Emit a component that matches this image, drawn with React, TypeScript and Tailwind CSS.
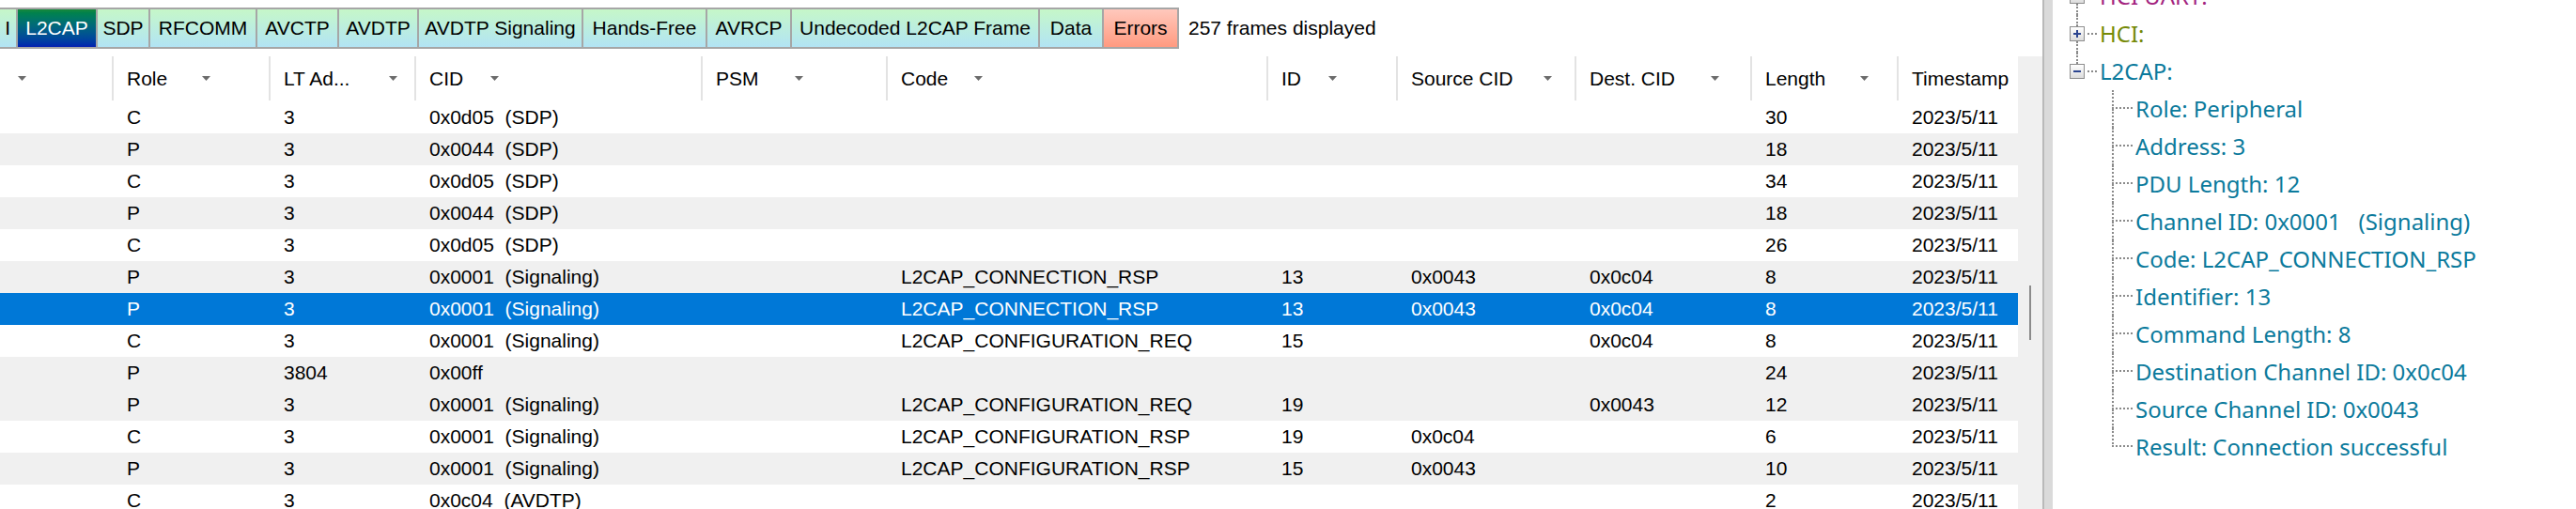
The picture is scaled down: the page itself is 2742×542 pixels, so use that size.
import React from 'react';

// column widths of the frame list, left to right
const cols = [
  { w: 'w-[121px]', label: '', span: 'w-[5px]' },
  { w: 'w-[167px]', label: 'Role', span: 'w-[80px]' },
  { w: 'w-[155px]', label: 'LT Ad...', span: 'w-[112px]' },
  { w: 'w-[305px]', label: 'CID', span: 'w-[65px]' },
  { w: 'w-[197px]', label: 'PSM', span: 'w-[84px]' },
  { w: 'w-[405px]', label: 'Code', span: 'w-[78px]' },
  { w: 'w-[138px]', label: 'ID', span: 'w-[50px]' },
  { w: 'w-[190px]', label: 'Source CID', span: 'w-[141px]' },
  { w: 'w-[187px]', label: 'Dest. CID', span: 'w-[129px]' },
  { w: 'w-[156px]', label: 'Length', span: 'w-[101px]' },
  { w: 'w-[127px]', label: 'Timestamp', span: '' },
];

const tabs = [
  { label: 'I', w: 'w-[19px]', kind: 'part' },
  { label: 'L2CAP', w: 'w-[85px]', kind: 'active' },
  { label: 'SDP', w: 'w-[56px]', kind: 'normal' },
  { label: 'RFCOMM', w: 'w-[114px]', kind: 'normal' },
  { label: 'AVCTP', w: 'w-[87px]', kind: 'normal' },
  { label: 'AVDTP', w: 'w-[85px]', kind: 'normal' },
  { label: 'AVDTP Signaling', w: 'w-[175px]', kind: 'normal' },
  { label: 'Hands-Free', w: 'w-[132px]', kind: 'normal' },
  { label: 'AVRCP', w: 'w-[90px]', kind: 'normal' },
  { label: 'Undecoded L2CAP Frame', w: 'w-[264px]', kind: 'normal' },
  { label: 'Data', w: 'w-[68px]', kind: 'normal' },
  { label: 'Errors', w: 'w-[80px]', kind: 'error' },
];

const TS = '2023/5/11';

const rows: { bg: string; cells: string[] }[] = [
  { bg: 'bg-white', cells: ['', 'C', '3', '0x0d05  (SDP)', '', '', '', '', '', '30', TS] },
  { bg: 'bg-[#f0f0f0]', cells: ['', 'P', '3', '0x0044  (SDP)', '', '', '', '', '', '18', TS] },
  { bg: 'bg-white', cells: ['', 'C', '3', '0x0d05  (SDP)', '', '', '', '', '', '34', TS] },
  { bg: 'bg-[#f0f0f0]', cells: ['', 'P', '3', '0x0044  (SDP)', '', '', '', '', '', '18', TS] },
  { bg: 'bg-white', cells: ['', 'C', '3', '0x0d05  (SDP)', '', '', '', '', '', '26', TS] },
  { bg: 'bg-[#f0f0f0]', cells: ['', 'P', '3', '0x0001  (Signaling)', '', 'L2CAP_CONNECTION_RSP', '13', '0x0043', '0x0c04', '8', TS] },
  { bg: 'bg-[#0078d7] text-white', cells: ['', 'P', '3', '0x0001  (Signaling)', '', 'L2CAP_CONNECTION_RSP', '13', '0x0043', '0x0c04', '8', TS] },
  { bg: 'bg-white', cells: ['', 'C', '3', '0x0001  (Signaling)', '', 'L2CAP_CONFIGURATION_REQ', '15', '', '0x0c04', '8', TS] },
  { bg: 'bg-[#f0f0f0]', cells: ['', 'P', '3804', '0x00ff', '', '', '', '', '', '24', TS] },
  { bg: 'bg-[#f0f0f0]', cells: ['', 'P', '3', '0x0001  (Signaling)', '', 'L2CAP_CONFIGURATION_REQ', '19', '', '0x0043', '12', TS] },
  { bg: 'bg-white', cells: ['', 'C', '3', '0x0001  (Signaling)', '', 'L2CAP_CONFIGURATION_RSP', '19', '0x0c04', '', '6', TS] },
  { bg: 'bg-[#f0f0f0]', cells: ['', 'P', '3', '0x0001  (Signaling)', '', 'L2CAP_CONFIGURATION_RSP', '15', '0x0043', '', '10', TS] },
  { bg: 'bg-white', cells: ['', 'C', '3', '0x0c04  (AVDTP)', '', '', '', '', '', '2', TS] },
];

const fields = [
  'Role: Peripheral',
  'Address: 3',
  'PDU Length: 12',
  'Channel ID: 0x0001   (Signaling)',
  'Code: L2CAP_CONNECTION_RSP',
  'Identifier: 13',
  'Command Length: 8',
  'Destination Channel ID: 0x0c04',
  'Source Channel ID: 0x0043',
  'Result: Connection successful',
];

function Arrow() {
  return (
    <svg width="9" height="5" viewBox="0 0 9 5" className="shrink-0">
      <path d="M0 0h9L4.5 5z" fill="#6b6b6b" />
    </svg>
  );
}

function Tab({ label, w, kind }: { label: string; w: string; kind: string }) {
  const look =
    kind === 'active'
      ? 'bg-linear-to-b from-[#16883a] to-[#0a1fb0] text-white justify-center'
      : kind === 'error'
        ? 'bg-linear-to-b from-[#ffc8bc] to-[#ff9a80] justify-center'
        : kind === 'part'
          ? 'bg-linear-to-b from-[#c6f7c8] to-[#b2e4f4] justify-end pr-[6px]'
          : 'bg-linear-to-b from-[#c6f7c8] to-[#b2e4f4] justify-center';
  return (
    <div className={`${w} ${look} flex shrink-0 items-center border-y-2 border-r-2 border-[#a6a6a6]`}>
      {label}
    </div>
  );
}

function PlusBox({ open }: { open: boolean }) {
  return (
    <div className="flex h-[16px] w-[16px] shrink-0 items-center justify-center border border-[#8e8e8e] bg-linear-to-b from-white to-[#dcdcdc]">
      <svg width="10" height="10" viewBox="0 0 10 10">
        <path d="M1 5h8" stroke="#2c4590" strokeWidth="2" />
        {!open && <path d="M5 1v8" stroke="#2c4590" strokeWidth="2" />}
      </svg>
    </div>
  );
}

function TopNode({ label, color, open, down }: { label: string; color: string; open: boolean; down: boolean }) {
  return (
    <div className="flex h-[40px] items-stretch pl-[18px]">
      <div className="flex w-[16px] shrink-0 flex-col items-center">
        <div className="w-0 flex-1 border-l-2 border-dotted border-[#8a8a8a]" />
        <PlusBox open={open} />
        <div className={down ? 'w-0 flex-1 border-l-2 border-dotted border-[#8a8a8a]' : 'w-0 flex-1'} />
      </div>
      <div className="mx-[3px] w-[10px] self-center border-t-2 border-dotted border-[#8a8a8a]" />
      <span className={`self-center whitespace-pre ${color}`}>{label}</span>
    </div>
  );
}

function ChildNode({ label, last }: { label: string; last: boolean }) {
  return (
    <div className="flex h-[40px] items-stretch pl-[63px]">
      <div className="flex w-[22px] shrink-0 flex-col">
        <div className="h-[20px] border-b-2 border-l-2 border-dotted border-[#8a8a8a]" />
        <div className={last ? 'h-[20px]' : 'h-[20px] border-l-2 border-dotted border-[#8a8a8a]'} />
      </div>
      <span className="ml-[3px] self-center whitespace-pre text-[#0b7a9c]">{label}</span>
    </div>
  );
}

export default function App() {
  return (
    <div className="flex h-[542px] w-[2742px] overflow-hidden bg-white">
      {/* frame list */}
      <div className="flex w-[2174px] shrink-0 flex-col font-['Liberation_Sans',Arial,sans-serif] text-[21px] text-black">
        <div className="flex h-[52px] shrink-0 pt-[8px]">
          {tabs.map((t) => (
            <Tab key={t.label} {...t} />
          ))}
          <div className="ml-[10px] flex items-center whitespace-nowrap">257 frames displayed</div>
        </div>

        <div className="flex min-h-0 flex-1">
          <div className="flex w-[2148px] shrink-0 flex-col">
            <div className="flex h-[56px] shrink-0 pt-[8px]">
              {cols.map((c, i) => (
                <div
                  key={i}
                  className={`${c.w} flex h-[47px] shrink-0 items-center pl-[14px] ${i < cols.length - 1 ? 'border-r-2 border-[#e3e3e3]' : ''}`}
                >
                  {c.span ? (
                    <>
                      <span className={`${c.span} shrink-0 whitespace-nowrap`}>{c.label}</span>
                      <Arrow />
                    </>
                  ) : (
                    <span className="whitespace-nowrap">{c.label}</span>
                  )}
                </div>
              ))}
            </div>
            {rows.map((r, i) => (
              <div key={i} className={`flex h-[34px] shrink-0 items-center ${r.bg}`}>
                {r.cells.map((v, j) => (
                  <div key={j} className={`${cols[j].w} shrink-0 overflow-hidden whitespace-pre pl-[14px] leading-[34px]`}>
                    {v}
                  </div>
                ))}
              </div>
            ))}
          </div>
          <div className="mt-[8px] flex w-[26px] shrink-0 flex-col bg-[#f0f0f0]">
            <div className="ml-[12px] mt-[244px] h-[58px] w-[2px] bg-[#8b8b8b]" />
          </div>
        </div>
      </div>

      {/* splitter */}
      <div className="w-[2px] shrink-0 bg-[#b9b9b9]" />
      <div className="w-[9px] shrink-0 bg-[#dadada]" />

      {/* decode tree */}
      <div className="min-w-0 flex-1 overflow-hidden font-['Noto_Sans',sans-serif] text-[24px]">
        <div className="-mt-[24px] flex flex-col">
          <TopNode label="HCI UART:" color="text-[#a3247f]" open={false} down />
          <TopNode label="HCI:" color="text-[#768a08]" open={false} down />
          <TopNode label="L2CAP:" color="text-[#0b7a9c]" open down={false} />
          {fields.map((f, i) => (
            <ChildNode key={f} label={f} last={i === fields.length - 1} />
          ))}
        </div>
      </div>
    </div>
  );
}
